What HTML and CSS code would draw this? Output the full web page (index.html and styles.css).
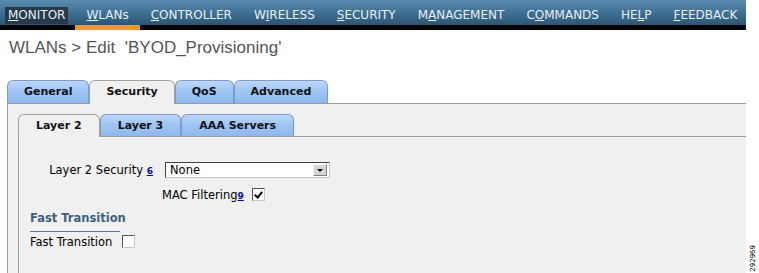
FILE: index.html
```html
<!DOCTYPE html>
<html lang="en">
<head>
	<meta charset="UTF-8">
	<title>WLANs &gt; Edit</title>
	<link rel="stylesheet" href="styles.css">
</head>
<body>
<div id="page">
	<div id="main">
		<ul id="topnav">
			<li class="sel"><a href="#"><span><u>M</u>ONITOR</span></a></li>
			<li class="hover"><a href="#"><u>W</u>LANs</a></li>
			<li><a href="#"><u>C</u>ONTROLLER</a></li>
			<li><a href="#">W<u>I</u>RELESS</a></li>
			<li><a href="#"><u>S</u>ECURITY</a></li>
			<li><a href="#">M<u>A</u>NAGEMENT</a></li>
			<li><a href="#">C<u>O</u>MMANDS</a></li>
			<li><a href="#">HE<u>L</u>P</a></li>
			<li><a href="#"><u>F</u>EEDBACK</a></li>
		</ul>
		<h1 class="title">WLANs &gt; Edit &nbsp;'BYOD_Provisioning'</h1>
		<ul class="tabs">
			<li>General</li>
			<li class="on">Security</li>
			<li>QoS</li>
			<li>Advanced</li>
		</ul>
		<div class="panel outer">
			<ul class="tabs sub">
				<li class="on">Layer 2</li>
				<li>Layer 3</li>
				<li>AAA Servers</li>
			</ul>
			<div class="panel inner">
				<div class="row first">
					<span class="lbl">Layer 2 Security <a href="#" class="note">6</a></span>
					<div class="select">
						<span class="val">None</span>
						<span class="btn"></span>
					</div>
				</div>
				<div class="row second">
					<span>MAC Filtering<a href="#" class="note">9</a></span>
					<span class="chk checked"></span>
				</div>
				<div class="section">
					<h2>Fast Transition</h2>
					<div class="row">
						<span>Fast Transition</span>
						<span class="chk"></span>
					</div>
				</div>
			</div>
		</div>
	</div>
	<div id="figno"><span>292969</span></div>
</div>
</body>
</html>
```

FILE: styles.css
```css
*{
	margin: 0;
	padding: 0;
}
body{
	background: #fff;
	font-family: "DejaVu Sans", Verdana, sans-serif;
	font-size: 11.5px;
	color: #000;
	overflow: hidden;
}
#page{
	display: flex;
	height: 273px;
}
#main{
	width: 746px;
	display: flex;
	flex-direction: column;
}
/* top menu */
#topnav{
	display: flex;
	align-items: flex-end;
	height: 24px;
	padding: 0 0 1px 5px;
	list-style: none;
	background: linear-gradient(to bottom, #5a8cb0 0%, #3f7194 50%, #2b5675 100%);
	border-bottom: 5px solid #000;
}
#topnav li{
	position: relative;
}
#topnav a{
	display: block;
	padding: 0 11px;
	line-height: 17px;
	font-size: 12px;
	color: #e8eef3;
	text-decoration: none;
}
#topnav u{
	text-decoration: underline;
}
#topnav .sel a{
	padding: 0 7px 0 0;
}
#topnav .sel span{
	display: inline-block;
	padding: 0 3px;
	background: #263a4b;
}
#topnav .hover:after{
	content: "";
	position: absolute;
	left: 0;
	right: 0;
	bottom: -6px;
	height: 5px;
	background: #f39a1b;
}
.title{
	margin: 8px 0 0 9px;
	font-family: "Liberation Sans", Arial, sans-serif;
	font-size: 17px;
	font-weight: normal;
	line-height: 20px;
	color: #555;
}
/* tabs */
.tabs{
	display: flex;
	list-style: none;
	margin: 22px 0 0 7px;
	position: relative;
	z-index: 1;
}
.tabs li{
	height: 22px;
	line-height: 22px;
	padding: 0 16px;
	font-size: 11px;
	font-weight: bold;
	color: #111;
	border: 1px solid #7b9cc6;
	border-bottom: none;
	border-radius: 6px 6px 0 0;
	background: linear-gradient(to bottom, #bcd7f9 0%, #9fc5f3 45%, #8db9ef 100%);
}
.tabs li.on{
	height: 23px;
	margin-bottom: -1px;
	background: #f0f0f0;
	border-color: #a2a2a2;
}
.tabs.sub{
	margin: 10px 0 0 0;
}
.tabs.sub li{
	height: 21px;
	line-height: 21px;
	padding: 0 17px;
}
.tabs.sub li.on{
	height: 22px;
}
.panel{
	background: #f0f0f0;
	border-top: 1px solid #9c9c9c;
	border-left: 1px solid #9c9c9c;
}
.outer{
	flex: 1;
	margin-left: 7px;
	padding-left: 10px;
	display: flex;
	flex-direction: column;
}
.inner{
	flex: 1;
	padding-top: 25px;
}
/* form */
.row{
	display: flex;
	align-items: center;
}
.row.first{
	height: 16px;
}
.lbl{
	width: 134px;
	margin-right: 12px;
	text-align: right;
}
.note{
	font-size: 9px;
	font-weight: bold;
	color: #0000cc;
}
.select{
	display: flex;
	align-items: center;
	width: 163px;
	height: 14px;
	background: #fff;
	border-top: 1px solid #404040;
	border-left: 1px solid #404040;
	border-right: 1px solid #c8c8c8;
	border-bottom: 1px solid #c8c8c8;
}
.select .val{
	flex: 1;
	padding-left: 4px;
	line-height: 14px;
}
.select .btn{
	position: relative;
	width: 12px;
	height: 10px;
	margin-right: 2px;
	background: #d8d5ce;
	border-top: 1px solid #fff;
	border-left: 1px solid #fff;
	border-right: 1px solid #808080;
	border-bottom: 1px solid #808080;
}
.select .btn:after{
	content: "";
	position: absolute;
	left: 3px;
	top: 4px;
	border-left: 3px solid transparent;
	border-right: 3px solid transparent;
	border-top: 3px solid #000;
}
.row.second{
	height: 13px;
	margin: 10px 0 0 143px;
}
.chk{
	position: relative;
	display: inline-block;
	width: 11px;
	height: 11px;
	margin-left: 8px;
	background: #fff;
	border-top: 1px solid #555;
	border-left: 1px solid #555;
	border-right: 1px solid #c8c8c8;
	border-bottom: 1px solid #c8c8c8;
}
.chk.checked:after{
	content: "";
	position: absolute;
	left: 3px;
	top: 1px;
	width: 3px;
	height: 6px;
	border-right: 2px solid #000;
	border-bottom: 2px solid #000;
	transform: rotate(40deg);
}
.section{
	margin: 10px 0 0 11px;
}
.section h2{
	width: 90px;
	padding-bottom: 6px;
	font-size: 11.5px;
	line-height: 14px;
	color: #3d5f7e;
	border-bottom: 1px solid #5b7c9a;
	white-space: nowrap;
}
.section .row{
	height: 13px;
	margin-top: 3px;
}
.section .chk{
	margin-left: 10px;
}
/* figure number */
#figno{
	flex: 1;
	display: flex;
	align-items: flex-end;
	padding-left: 4px;
}
#figno span{
	writing-mode: vertical-rl;
	transform: rotate(180deg);
	font-size: 7px;
	line-height: 7px;
	margin-bottom: 1px;
}
```
